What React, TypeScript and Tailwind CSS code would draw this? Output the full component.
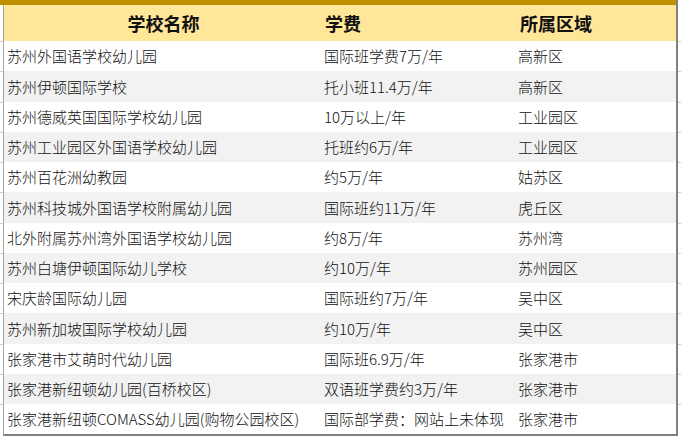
import React from "react";

const rows: [string, string, string][] = [
  ["苏州外国语学校幼儿园", "国际班学费7万/年", "高新区"],
  ["苏州伊顿国际学校", "托小班11.4万/年", "高新区"],
  ["苏州德威英国国际学校幼儿园", "10万以上/年", "工业园区"],
  ["苏州工业园区外国语学校幼儿园", "托班约6万/年", "工业园区"],
  ["苏州百花洲幼教园", "约5万/年", "姑苏区"],
  ["苏州科技城外国语学校附属幼儿园", "国际班约11万/年", "虎丘区"],
  ["北外附属苏州湾外国语学校幼儿园", "约8万/年", "苏州湾"],
  ["苏州白塘伊顿国际幼儿学校", "约10万/年", "苏州园区"],
  ["宋庆龄国际幼儿园", "国际班约7万/年", "吴中区"],
  ["苏州新加坡国际学校幼儿园", "约10万/年", "吴中区"],
  ["张家港市艾萌时代幼儿园", "国际班6.9万/年", "张家港市"],
  ["张家港新纽顿幼儿园(百桥校区)", "双语班学费约3万/年", "张家港市"],
  ["张家港新纽顿COMASS幼儿园(购物公园校区)", "国际部学费：网站上未体现", "张家港市"],
];

export default function App() {
  return (
    <div
      className="w-[681px] h-[438px] bg-white overflow-hidden flex flex-col text-[#111]"
      style={{ fontFamily: '"Noto Sans CJK SC", "Noto Sans", sans-serif' }}
    >
      <div className="flex h-[5px] shrink-0">
        <div className="w-[676px] h-[5px] bg-[#bf8f00]" />
        <div className="w-[2px] h-[5px] bg-[#808080]" />
      </div>
      <div className="flex">
        <div className="w-[3px] flex flex-col">
          <div className="h-[36px]" />
          {rows.map((_, i) => (
            <div key={i} className="h-[30.25px] border-t border-[#d0d0d0]" />
          ))}
        </div>
        <div className="w-[675px] border-l border-l-[#a6a6a6] border-r-2 border-r-[#808080] border-b-2 border-b-[#808080] flex flex-col">
          <div className="h-[36px] bg-[#ffe699] flex items-center text-[18px] font-bold">
            <div className="w-[316px] text-center pl-[3px]">学校名称</div>
            <div className="w-[194px] pl-[5px]">学费</div>
            <div className="flex-1 pl-[6px]">所属区域</div>
          </div>
          {rows.map((r, i) => (
            <div
              key={i}
              className={`h-[30.25px] flex items-center text-[15px] font-light whitespace-nowrap pt-[1px] ${
                i % 2 === 1 ? "bg-[#f2f2f2]" : "bg-white"
              }`}
            >
              <div className="w-[316px] pl-[3px]">{r[0]}</div>
              <div className="w-[194px] pl-[4px]">{r[1]}</div>
              <div className="flex-1 pl-[4px]">{r[2]}</div>
            </div>
          ))}
        </div>
        <div className="w-[3px] flex flex-col">
          <div className="h-[36px]" />
          {rows.map((_, i) => (
            <div key={i} className="h-[30.25px] border-t border-[#d0d0d0]" />
          ))}
        </div>
      </div>
    </div>
  );
}
